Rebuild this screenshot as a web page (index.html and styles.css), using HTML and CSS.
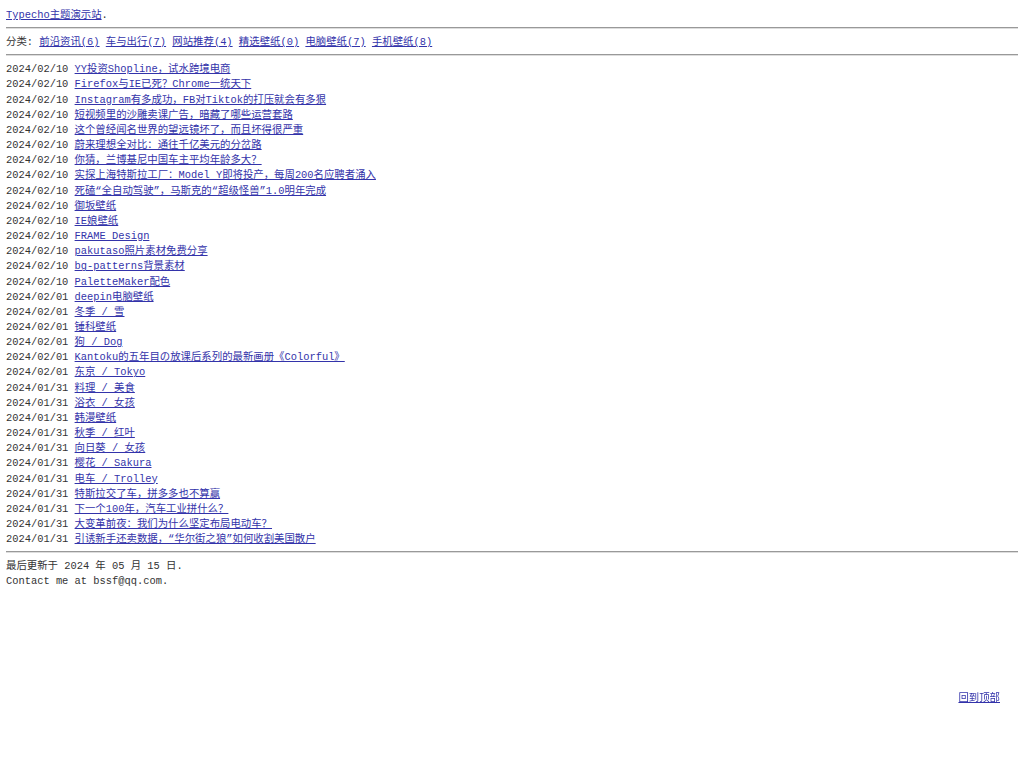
FILE: index.html
```html
<!DOCTYPE html>
<html lang="zh-CN">
<head>
    <meta charset="utf-8">
    <title>Typecho主题演示站</title>
    <link rel="stylesheet" href="styles.css">
</head>
<body>
    <a id="top"></a>
    <div class="site-title"><a href="#">Typecho主题演示站</a>.</div>
    <hr>
    <div class="categories">
        分类:
        <a href="#">前沿资讯(6)</a>
        <a href="#">车与出行(7)</a>
        <a href="#">网站推荐(4)</a>
        <a href="#">精选壁纸(0)</a>
        <a href="#">电脑壁纸(7)</a>
        <a href="#">手机壁纸(8)</a>
    </div>
    <hr>
    <ul class="posts">
        <li>2024/02/10 <a href="#">YY投资Shopline，试水跨境电商</a></li>
        <li>2024/02/10 <a href="#">Firefox与IE已死？Chrome一统天下</a></li>
        <li>2024/02/10 <a href="#">Instagram有多成功，FB对Tiktok的打压就会有多狠</a></li>
        <li>2024/02/10 <a href="#">短视频里的沙雕卖课广告，暗藏了哪些运营套路</a></li>
        <li>2024/02/10 <a href="#">这个曾经闻名世界的望远镜坏了，而且坏得很严重</a></li>
        <li>2024/02/10 <a href="#">蔚来理想全对比：通往千亿美元的分岔路</a></li>
        <li>2024/02/10 <a href="#">你猜，兰博基尼中国车主平均年龄多大？</a></li>
        <li>2024/02/10 <a href="#">实探上海特斯拉工厂：Model Y即将投产，每周200名应聘者涌入</a></li>
        <li>2024/02/10 <a href="#">死磕“全自动驾驶”，马斯克的“超级怪兽”1.0明年完成</a></li>
        <li>2024/02/10 <a href="#">御坂壁纸</a></li>
        <li>2024/02/10 <a href="#">IE娘壁纸</a></li>
        <li>2024/02/10 <a href="#">FRAME Design</a></li>
        <li>2024/02/10 <a href="#">pakutaso照片素材免费分享</a></li>
        <li>2024/02/10 <a href="#">bg-patterns背景素材</a></li>
        <li>2024/02/10 <a href="#">PaletteMaker配色</a></li>
        <li>2024/02/01 <a href="#">deepin电脑壁纸</a></li>
        <li>2024/02/01 <a href="#">冬季 / 雪</a></li>
        <li>2024/02/01 <a href="#">锤科壁纸</a></li>
        <li>2024/02/01 <a href="#">狗 / Dog</a></li>
        <li>2024/02/01 <a href="#">Kantoku的五年目の放课后系列的最新画册《Colorful》</a></li>
        <li>2024/02/01 <a href="#">东京 / Tokyo</a></li>
        <li>2024/01/31 <a href="#">料理 / 美食</a></li>
        <li>2024/01/31 <a href="#">浴衣 / 女孩</a></li>
        <li>2024/01/31 <a href="#">韩漫壁纸</a></li>
        <li>2024/01/31 <a href="#">秋季 / 红叶</a></li>
        <li>2024/01/31 <a href="#">向日葵 / 女孩</a></li>
        <li>2024/01/31 <a href="#">樱花 / Sakura</a></li>
        <li>2024/01/31 <a href="#">电车 / Trolley</a></li>
        <li>2024/01/31 <a href="#">特斯拉交了车，拼多多也不算赢</a></li>
        <li>2024/01/31 <a href="#">下一个100年，汽车工业拼什么？</a></li>
        <li>2024/01/31 <a href="#">大变革前夜：我们为什么坚定布局电动车？</a></li>
        <li>2024/01/31 <a href="#">引诱新手还卖数据，“华尔街之狼”如何收割美国散户</a></li>
    </ul>
    <hr>
    <div class="footer">
        最后更新于 2024 年 05 月 15 日.<br>
        Contact me at bssf@qq.com.
    </div>
    <a class="back-top" href="#top">回到顶部</a>
</body>
</html>
```

FILE: styles.css
```css
body {
    margin: 8px 6px;
    font-family: "Liberation Mono", "Noto Sans CJK SC", monospace;
    font-size: 10.4px;
    line-height: 15.16px;
    color: #333;
    background: #fff;
}

a {
    color: #33a;
}

hr {
    margin: 4px 0 6px;
    border: none;
    border-top: 1px solid #999;
    border-bottom: 1px solid #ddd;
}

.categories {
    margin-bottom: 1px;
}

.posts {
    list-style: none;
    margin: 0;
    padding: 0;
}

.back-top {
    position: fixed;
    right: 24px;
    bottom: 62px;
}
```
